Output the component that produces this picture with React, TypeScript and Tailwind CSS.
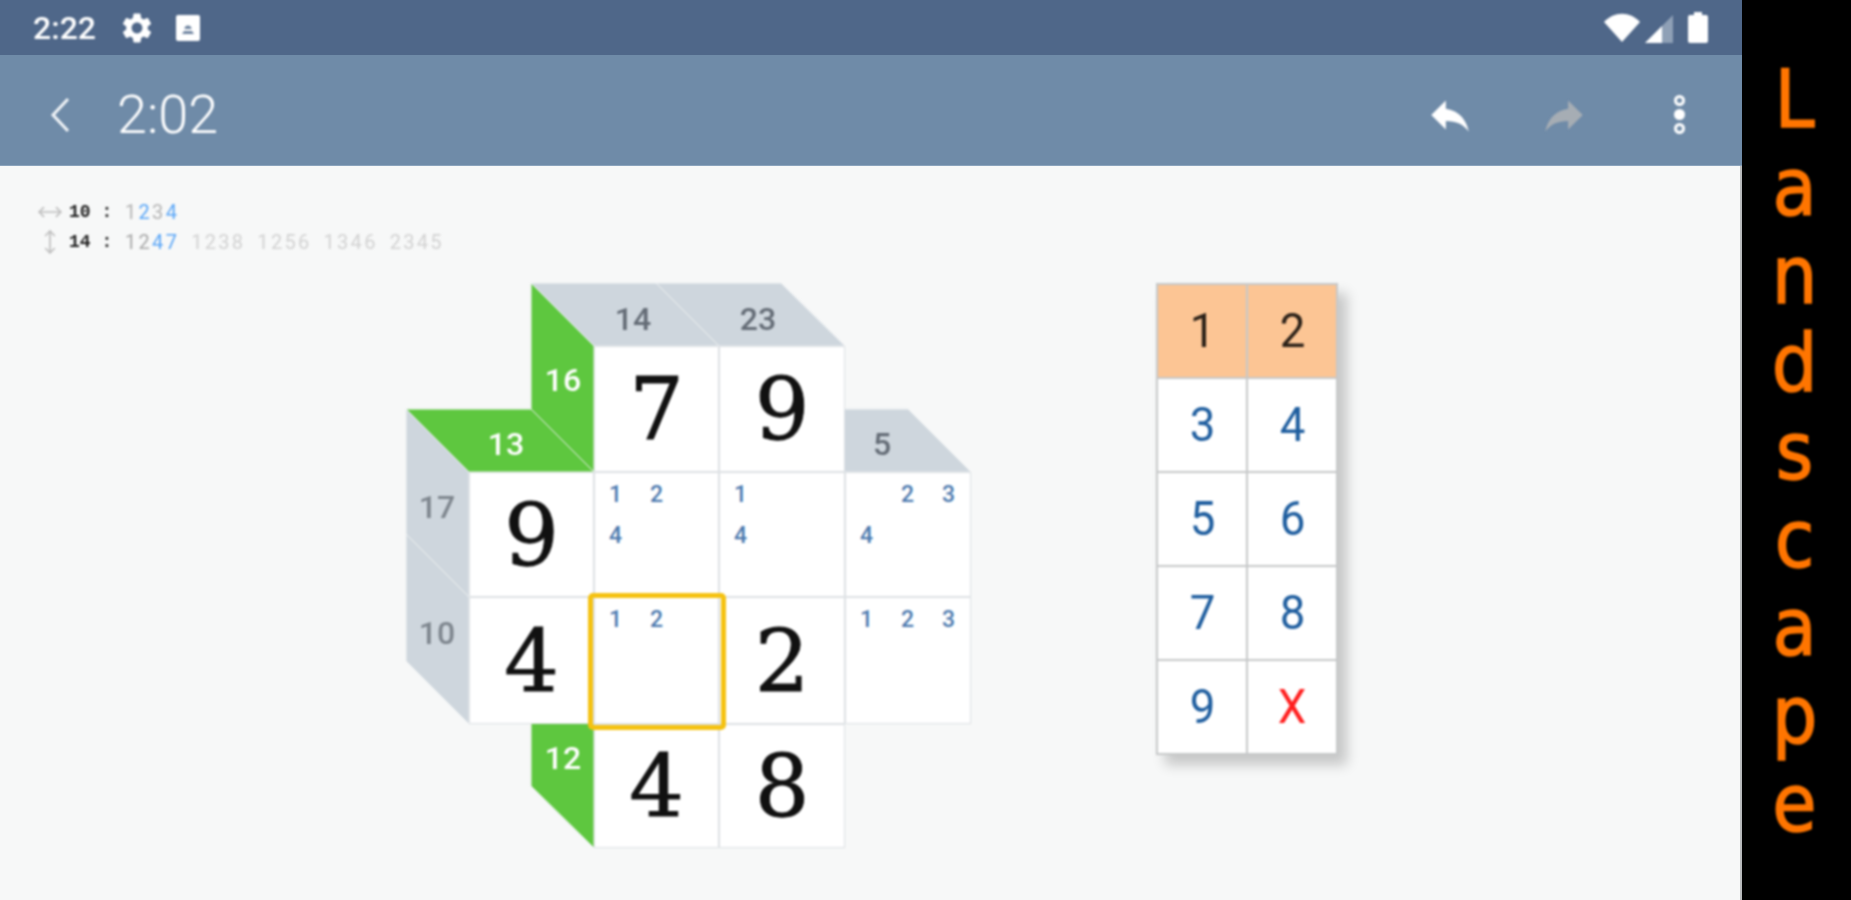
import { MoveHorizontal, MoveVertical } from "lucide-react";

const GEAR =
  "M19.14 12.94c.04-.3.06-.61.06-.94 0-.32-.02-.64-.07-.94l2.03-1.58c.18-.14.23-.41.12-.61l-1.92-3.32c-.12-.22-.37-.29-.59-.22l-2.39.96c-.5-.38-1.03-.7-1.62-.94l-.36-2.54c-.04-.24-.24-.41-.48-.41h-3.84c-.24 0-.43.17-.47.41l-.36 2.54c-.59.24-1.13.57-1.62.94l-2.39-.96c-.22-.08-.47 0-.59.22L2.74 8.87c-.12.21-.08.47.12.61l2.03 1.58c-.05.3-.09.63-.09.94s.02.64.07.94l-2.03 1.58c-.18.14-.23.41-.12.61l1.92 3.32c.12.22.37.29.59.22l2.39-.96c.5.38 1.03.7 1.62.94l.36 2.54c.05.24.24.41.48.41h3.84c.24 0 .44-.17.47-.41l.36-2.54c.59-.24 1.13-.56 1.62-.94l2.39.96c.22.08.47 0 .59-.22l1.92-3.32c.12-.22.07-.47-.12-.61l-2.01-1.58zM12 15.6c-1.98 0-3.6-1.62-3.6-3.6s1.62-3.6 3.6-3.6 3.6 1.62 3.6 3.6-1.62 3.6-3.6 3.6z";
const REPLY = "M10 9V5l-7 7 7 7v-4.1c5 0 8.5 1.6 11 5.1-1-5-4-10-11-11z";

const faces = [
  { pts: "125,0 250,0 313,63 188,63", fill: "#ced6dd" },
  { pts: "250,0 375,0 439,63 313,63", fill: "#ced6dd" },
  { pts: "125,0 188,63 188,189 125,126", fill: "#5ec73f" },
  { pts: "0,126 125,126 188,189 63,189", fill: "#5ec73f" },
  { pts: "375,126 502,126 565,189 439,189", fill: "#ced6dd" },
  { pts: "0,126 63,189 63,314 0,251", fill: "#ced6dd" },
  { pts: "0,251 63,314 63,441 0,378", fill: "#ced6dd" },
  { pts: "125,378 188,441 188,565 125,503", fill: "#5ec73f" },
];

const clues = [
  { t: "14", x: 227, y: 47, c: "#646c76" },
  { t: "23", x: 352, y: 47, c: "#646c76" },
  { t: "16", x: 157, y: 108, c: "#ffffff" },
  { t: "13", x: 100, y: 172, c: "#ffffff" },
  { t: "5", x: 476, y: 172, c: "#646c76" },
  { t: "17", x: 31, y: 235, c: "#7e868e" },
  { t: "10", x: 31, y: 361, c: "#7e868e" },
  { t: "12", x: 157, y: 486, c: "#ffffff" },
];

function Cell({ pos, value, notes }: { pos: string; value?: string; notes?: string[] }) {
  return (
    <div className={`${pos} relative border border-[#dde1e4] bg-white flex items-center justify-center`}>
      {value && (
        <span className="font-['DejaVu_Serif',serif] text-[86px] leading-none text-[#111] [-webkit-text-stroke:1px_#111]">{value}</span>
      )}
      {notes && (
        <div className="absolute inset-0 grid grid-cols-[41px_41px_41px] grid-rows-[41px_41px_41px] pt-[1px]">
          {notes.map((n, i) => (
            <span key={i} className="flex items-center justify-center font-['Roboto',sans-serif] font-medium text-[23px] leading-none text-[#4c79ae]">
              {n}
            </span>
          ))}
        </div>
      )}
    </div>
  );
}

function Board() {
  return (
    <div className="relative w-[566px] h-[566px] shrink-0">
      <svg className="absolute inset-0" width="566" height="566" viewBox="0 0 566 566">
        {faces.map((f, i) => (
          <polygon key={i} points={f.pts} fill={f.fill} stroke="#eef1f3" strokeWidth="1" />
        ))}
        {clues.map((c) => (
          <text key={c.t} x={c.x} y={c.y} textAnchor="middle" fontSize="32" fontWeight="500" fill={c.c} className="font-['Roboto',sans-serif]">
            {c.t}
          </text>
        ))}
      </svg>
      <div className="absolute inset-0 grid grid-cols-[63px_125px_125px_126px_126px] grid-rows-[63px_126px_125px_127px_124px]">
        <Cell pos="col-start-3 row-start-2 col-span-1" value="7" />
        <Cell pos="col-start-4 row-start-2" value="9" />
        <Cell pos="col-start-2 row-start-3" value="9" />
        <Cell pos="col-start-3 row-start-3" notes={["1", "2", "", "4"]} />
        <Cell pos="col-start-4 row-start-3" notes={["1", "", "", "4"]} />
        <Cell pos="col-start-5 row-start-3" notes={["", "2", "3", "4"]} />
        <Cell pos="col-start-2 row-start-4" value="4" />
        <Cell pos="col-start-3 row-start-4" notes={["1", "2"]} />
        <Cell pos="col-start-4 row-start-4" value="2" />
        <Cell pos="col-start-5 row-start-4" notes={["1", "2", "3"]} />
        <Cell pos="col-start-3 row-start-5" value="4" />
        <Cell pos="col-start-4 row-start-5" value="8" />
        {/* selected cell frame sits over the grid lines */}
        <div className="col-start-3 row-start-4 -ml-[6px] -mr-[7px] -mt-[4px] -mb-[6px] border-[5px] border-[#f5c211] rounded-[5px] z-10" />
      </div>
    </div>
  );
}

function Keypad() {
  const keys = ["1", "2", "3", "4", "5", "6", "7", "8", "9", "X"];
  return (
    <div className="grid grid-cols-[88px_88px] grid-rows-[92px_92px_92px_92px_92px] border-[2px] border-[#c6c8c9] bg-[#c6c8c9] gap-[2px] shadow-[9px_10px_12px_rgba(0,0,0,0.2)] shrink-0">
      {keys.map((k, i) => {
        const top = i < 2;
        return (
          <div key={k} className={`flex items-center justify-center ${top ? "bg-[#fcc594]" : "bg-white"}`}>
            <span
              className={`font-['Roboto',sans-serif] text-[48px] leading-none scale-x-95 ${
                top ? "text-[#2b2118]" : k === "X" ? "text-[#ff1f1f]" : "text-[#1f5e9f]"
              }`}
            >
              {k}
            </span>
          </div>
        );
      })}
    </div>
  );
}

function Hints() {
  const gray = "text-[#b4b4b4]";
  const blue = "text-[#5aa6f7]";
  const faint = "text-[#d2d2d2]";
  return (
    <div className="flex flex-col font-['Roboto',sans-serif] text-[20px] tracking-[2.3px] leading-[30px]">
      <div className="flex items-center">
        <MoveHorizontal className="w-[26px] h-[26px] text-[#bdbdbd] shrink-0" strokeWidth={1.5} />
        <span className="w-[56px] ml-[6px] font-['Liberation_Mono',monospace] font-bold text-[18px] tracking-normal text-[#222]">10 :</span>
        <span>
          <span className={gray}>1</span>
          <span className={blue}>2</span>
          <span className={gray}>3</span>
          <span className={blue}>4</span>
        </span>
      </div>
      <div className="flex items-center">
        <MoveVertical className="w-[26px] h-[26px] text-[#bdbdbd] shrink-0" strokeWidth={1.5} />
        <span className="w-[56px] ml-[6px] font-['Liberation_Mono',monospace] font-bold text-[18px] tracking-normal text-[#222]">14 :</span>
        <div className="flex gap-[12px]">
          <span>
            <span className="text-[#a8a8a8]">12</span>
            <span className={blue}>47</span>
          </span>
          <span className={faint}>1238</span>
          <span className={faint}>1256</span>
          <span className={faint}>1346</span>
          <span className={faint}>2345</span>
        </div>
      </div>
    </div>
  );
}

export default function App() {
  return (
    <div className="flex w-[1851px] h-[900px] overflow-hidden bg-black">
      <div className="flex flex-col w-[1742px] shrink-0">
        {/* status bar */}
        <div className="h-[55px] bg-[#4f6789]">
          <div className="flex items-center h-full pl-[33px] pr-[34px] text-white blur-[0.9px]">
            <span className="font-['Roboto',sans-serif] font-medium text-[32px] leading-none w-[86px]">2:22</span>
            <svg className="w-[36px] h-[36px]" viewBox="0 0 24 24" fill="#fff">
              <path d={GEAR} />
            </svg>
            <svg className="w-[24px] h-[26px] ml-[21px]" viewBox="0 0 24 26">
              <rect width="24" height="26" rx="2" fill="#fff" />
              <path d="M8.5 14a3.5 3.5 0 1 1 7 0zM6 19l2-3h8l2 3z" fill="#6f84a0" />
            </svg>
            <div className="ml-auto flex items-center gap-[5px]">
              <svg className="w-[36px] h-[29px]" viewBox="0 0 36 29">
                <path d="M0 9C10 -2 26 -2 36 9L18 29z" fill="#fff" />
              </svg>
              <svg className="w-[28px] h-[28px] mt-[3px]" viewBox="0 0 28 28">
                <path d="M28 0V28H0z" fill="#8fa0b6" />
                <path d="M17 11V28H0z" fill="#fff" />
              </svg>
              <svg className="w-[20px] h-[31px] ml-[10px]" viewBox="0 0 20 31">
                <path d="M6 0h8v3h4a2 2 0 0 1 2 2v24a2 2 0 0 1-2 2H2a2 2 0 0 1-2-2V5a2 2 0 0 1 2-2h4z" fill="#fff" />
              </svg>
            </div>
          </div>
        </div>
        {/* toolbar */}
        <div className="h-[111px] bg-[#6f8ba8] border-b border-[#8aa3bc]">
          <div className="flex items-center h-full pt-[9px] text-white blur-[0.9px]">
            <svg className="w-[20px] h-[36px] ml-[50px]" viewBox="0 0 20 36" fill="none" stroke="#f2f5f8" strokeWidth="3">
              <path d="M18 2 3 18l15 16" />
            </svg>
            <span className="ml-[47px] font-['Roboto',sans-serif] font-light text-[54px] leading-none">2:02</span>
            <svg className="ml-auto w-[50px] h-[50px]" viewBox="0 0 24 24" fill="#fff">
              <path d={REPLY} />
            </svg>
            <svg className="ml-[64px] w-[50px] h-[50px] -scale-x-100" viewBox="0 0 24 24" fill="#a6adb4">
              <path d={REPLY} />
            </svg>
            <div className="ml-[85px] mr-[57px] flex flex-col gap-[3px]">
              <span className="w-[11px] h-[11px] rounded-full border-[3px] border-white" />
              <span className="w-[11px] h-[11px] rounded-full bg-white" />
              <span className="w-[11px] h-[11px] rounded-full border-[3px] border-white" />
            </div>
          </div>
        </div>
        {/* puzzle area */}
        <div className="flex-1 bg-[#f7f8f8] border-r-[2px] border-[#b9bbbd]">
          <div className="pt-[31px] pl-[37px] blur-[0.9px]">
            <Hints />
            <div className="flex items-start mt-[26px] ml-[369px] gap-[184px]">
              <Board />
              <Keypad />
            </div>
          </div>
        </div>
      </div>
      <div className="flex-1 pr-[4px]">
        <div className="flex flex-col items-center pt-[56px] font-['DejaVu_Sans',sans-serif] text-[80px] leading-[88px] text-[#ff7500] [-webkit-text-stroke:1.5px_#ff7500] scale-x-90 blur-[0.9px]">
          {"Landscape".split("").map((ch, i) => (
            <span key={i}>{ch}</span>
          ))}
        </div>
      </div>
    </div>
  );
}
